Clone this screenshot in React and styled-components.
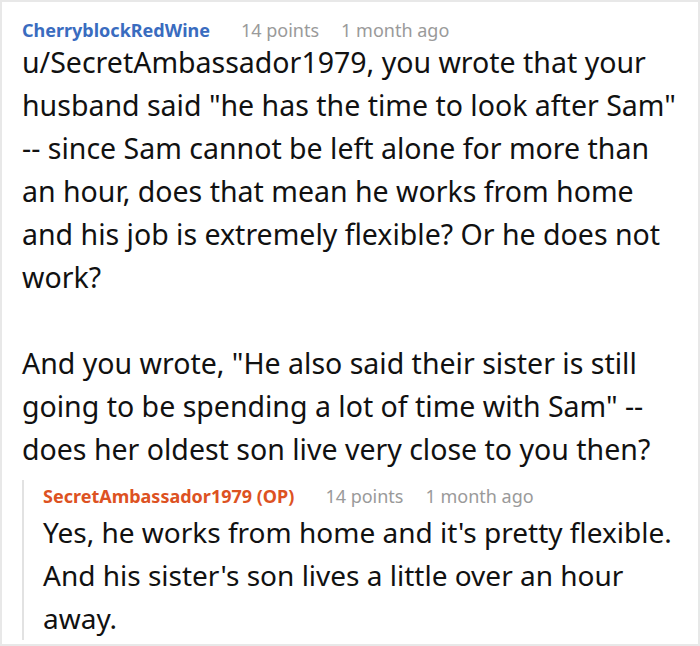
import React from 'react';
import styled, { createGlobalStyle } from 'styled-components';

const Global = createGlobalStyle`
  html, body {
    margin: 0;
    padding: 0;
    background: #fff;
  }
  body {
    font-family: "Noto Sans", "Open Sans", sans-serif;
  }
`;

const Card = styled.div`
  box-sizing: border-box;
  width: 700px;
  height: 646px;
  border: 2px solid #e8e8e8;
  padding: 16px 20px 0 20px;
  overflow: hidden;
`;

const Meta = styled.div`
  display: flex;
  align-items: center;
  height: ${({ tall }) => (tall ? '32px' : '24px')};
  font-size: 18px;
  line-height: 24px;
  white-space: nowrap;
`;

const Author = styled.span`
  font-weight: 700;
  color: ${({ op }) => (op ? '#dd5222' : '#3a6cbf')};
  margin-right: 31px;
`;

const Info = styled.span`
  color: #9a9a9a;
  margin-right: 22px;
`;

const Body = styled.div`
  font-size: ${({ small }) => (small ? '28px' : '28.5px')};
  line-height: 43px;
  color: #111;
  margin-top: -1px;

  p {
    margin: 0 0 43px 0;
  }
  p:last-child {
    margin-bottom: 0;
  }
`;

const Reply = styled.div`
  margin: 9px -8px 0 0;
  border-left: 2px solid #e2e2e2;
  padding-left: 19px;
`;

function Comment({ author, op, points, age, children, tall }) {
  return (
    <>
      <Meta tall={tall}>
        <Author op={op}>{author}</Author>
        <Info>{points}</Info>
        <Info>{age}</Info>
      </Meta>
      <Body small={tall}>{children}</Body>
    </>
  );
}

export default function App() {
  return (
    <>
      <Global />
      <Card>
        <Comment author="CherryblockRedWine" points="14 points" age="1 month ago">
          <p>
            u/SecretAmbassador1979, you wrote that your husband said "he has the time to look after Sam"
            -- since Sam cannot be left alone for more than an hour, does that mean he works from home
            and his job is extremely flexible? Or he does not work?
          </p>
          <p>
            And you wrote, "He also said their sister is still going to be spending a lot of time with
            Sam" -- does her oldest son live very close to you then?
          </p>
        </Comment>
        <Reply>
          <Comment author="SecretAmbassador1979 (OP)" op points="14 points" age="1 month ago" tall>
            <p>
              Yes, he works from home and it's pretty flexible. And his sister's son lives a little over
              an hour away.
            </p>
          </Comment>
        </Reply>
      </Card>
    </>
  );
}
